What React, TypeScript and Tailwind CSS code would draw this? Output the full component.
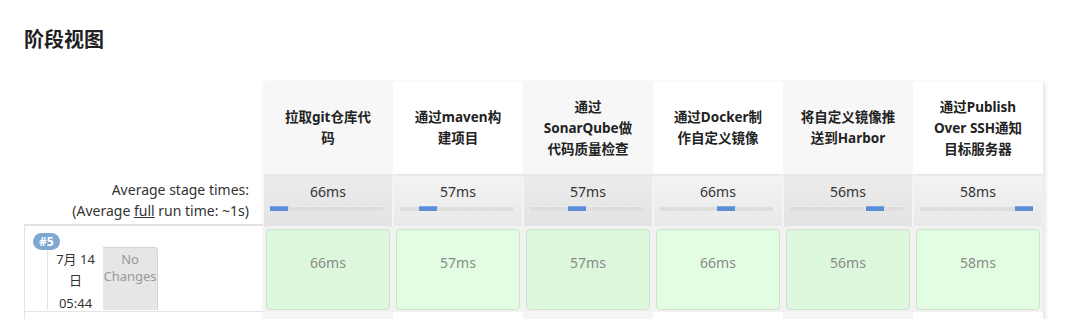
// Jenkins 阶段视图

type Stage = {
  name: string[];
  avg: string;
  run: string;
};

const stages: Stage[] = [
  { name: ["拉取git仓库代", "码"], avg: "66ms", run: "66ms" },
  { name: ["通过maven构", "建项目"], avg: "57ms", run: "57ms" },
  { name: ["通过", "SonarQube做", "代码质量检查"], avg: "57ms", run: "57ms" },
  { name: ["通过Docker制", "作自定义镜像"], avg: "66ms", run: "66ms" },
  { name: ["将自定义镜像推", "送到Harbor"], avg: "56ms", run: "56ms" },
  { name: ["通过Publish", "Over SSH通知", "目标服务器"], avg: "58ms", run: "58ms" },
];

const font = "font-['Noto_Sans','Noto_Sans_CJK_SC',sans-serif]";

function ProgressBar({ active }: { active: number }) {
  return (
    <div className="flex h-[5px] w-[113px] ml-[6px] mt-[4px]">
      {[0, 1, 2, 3, 4, 5].map(i => (
        <div
          key={i}
          className={`flex-1 border-r border-[#e4e4e4] last:border-r-0 ${
            i === active
              ? "bg-[#5b8dd6] border-t border-t-[#7fa8e6]"
              : "bg-[#dedede] border-t border-t-[#ececec]"
          }`}
        />
      ))}
    </div>
  );
}

export default function App() {
  return (
    <main className={`min-h-screen bg-white text-[#333] ${font} overflow-hidden`}>
      <div className="pl-6 pt-[24px]">
        <h1 className="text-[20px] font-bold leading-[32px] text-[#1f1f24]">阶段视图</h1>

        <div className="mt-[26px] flex">
          {/* Left column */}
          <div className="w-[239px] shrink-0 flex flex-col">
            <div className="h-[92px]" />
            <div className="h-[52px] border-b-2 border-[#e2e2e2] text-right pr-[14px] pt-[5px] text-[14px] leading-[21px] text-[#333]">
              <div>Average stage times:</div>
              <div>
                (Average <span className="underline">full</span> run time: ~1s)
              </div>
            </div>
            <div className="h-[86px] border-l border-b border-[#e4e4e4] relative">
              <div className="absolute left-[8px] top-[7px] h-[17px] px-[6px] rounded-full bg-[#7ea7d2] text-white text-[12px] font-bold leading-[17px] z-10">
                #5
              </div>
              <div className="flex ml-[22px] mt-[19px] h-[65px]">
                <div className="w-[56px] border-l border-[#e4e4e4] text-center text-[13px] leading-[21px] pt-[4px] text-[#333]">
                  <div>7月 14</div>
                  <div>日</div>
                  <div className="mt-[2px]">05:44</div>
                </div>
                <div className="w-[55px] bg-[#e6e6e6] border-t border-r border-[#d4d4d4] rounded-tr-[4px] text-center text-[13px] leading-[17px] text-[#9a9a9a] pt-[3px] mt-[2px]">
                  <div>No</div>
                  <div>Changes</div>
                </div>
              </div>
            </div>
            <div className="h-[20px] border-l border-[#e4e4e4]" />
          </div>

          {/* Stage table */}
          <div className="flex shadow-[2px_1px_5px_rgba(0,0,0,0.12)]">
            {stages.map((s, i) => {
              const odd = i % 2 === 0;
              return (
                <div key={i} className="w-[130px] flex flex-col">
                  <div
                    className={`h-[92px] flex flex-col items-center justify-center text-center text-[13.5px] font-bold leading-[21px] text-[#222] ${
                      odd ? "bg-[#f7f7f7]" : "bg-white"
                    }`}
                  >
                    {s.name.map(line => (
                      <div key={line} className="whitespace-nowrap">{line}</div>
                    ))}
                  </div>
                  <div
                    className={`h-[52px] pt-[5px] text-center text-[14px] leading-[21px] text-[#333] border-x border-[#f4f4f4] border-t-2 border-t-[#e8e8e8] ${
                      odd
                        ? "bg-gradient-to-b from-[#ececec] to-[#e3e3e3]"
                        : "bg-gradient-to-b from-[#f3f3f3] to-[#e9e9e9]"
                    }`}
                  >
                    {s.avg}
                    <ProgressBar active={i} />
                  </div>
                  <div className="h-[86px] bg-[#f2f2f2] px-[3px] pt-[3px] pb-[2px]">
                    <div
                      className={`h-full rounded-[4px] border border-[#cfe3cd] flex items-start justify-center pt-[22px] text-[14px] leading-[21px] text-[#8a8a8a] ${
                        odd ? "bg-[#ddf7dc]" : "bg-[#e3fde2]"
                      }`}
                    >
                      {s.run}
                    </div>
                  </div>
                  <div className={`h-[20px] ${odd ? "bg-[#f5f5f5]" : "bg-white"}`} />
                </div>
              );
            })}
          </div>
        </div>
      </div>
    </main>
  );
}
